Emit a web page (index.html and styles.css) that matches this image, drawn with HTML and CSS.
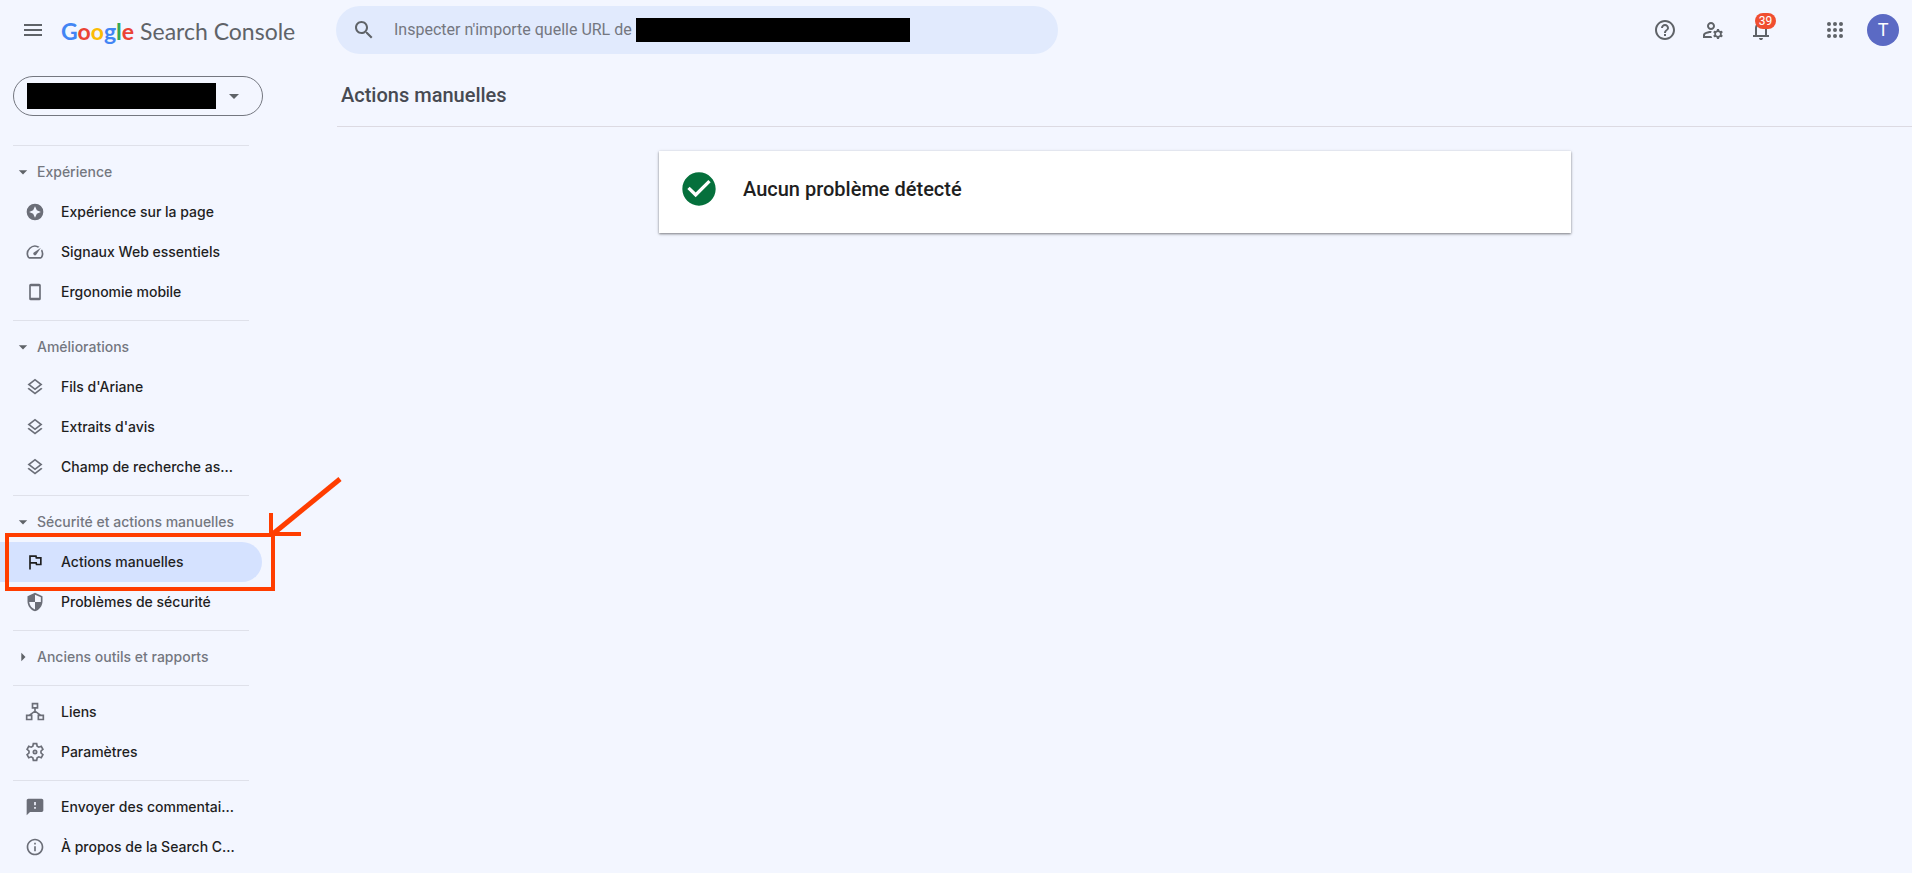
FILE: index.html
```html
<!DOCTYPE html>
<html lang="fr">
<head>
<meta charset="utf-8">
<meta name="viewport" content="width=device-width, initial-scale=1">
<title>Actions manuelles – Google Search Console</title>
<link rel="stylesheet" href="styles.css">
</head>
<body>
<svg class="sprite" aria-hidden="true">
  <symbol id="layers" viewBox="0 0 24 24"><path d="M11.99 18.54l-7.37-5.73L3 14.07l9 7 9-7-1.63-1.27-7.38 5.74zM12 16l7.36-5.73L21 9l-9-7-9 7 1.63 1.27L12 16zm0-11.47L17.74 9 12 13.47 6.26 9 12 4.53z"/></symbol>
  <symbol id="caret" viewBox="0 0 24 24"><path d="M7 10l5 5 5-5z"/></symbol>
</svg>

<header class="topbar">
  <div class="brand">
    <button class="icon-button" type="button" aria-label="Menu principal"><svg class="icon" viewBox="0 0 24 24"><path d="M3 18h18v-2H3v2zm0-5h18v-2H3v2zm0-7v2h18V6H3z"/></svg></button>
    <a class="logo" href="#"><span class="logo-google"><span class="blue">G</span><span class="red">o</span><span class="yellow">o</span><span class="blue">g</span><span class="green">l</span><span class="red">e</span></span><span class="logo-product">Search Console</span></a>
  </div>
  <form class="search" role="search">
    <svg class="icon" viewBox="0 0 24 24" aria-hidden="true"><path d="M15.5 14h-.79l-.28-.27C15.41 12.59 16 11.11 16 9.5 16 5.91 13.09 3 9.5 3S3 5.91 3 9.5 5.91 16 9.5 16c1.61 0 3.09-.59 4.23-1.57l.27.28v.79l5 4.99L20.49 19l-4.99-5zm-6 0C7.01 14 5 11.99 5 9.5S7.01 5 9.5 5 14 7.01 14 9.5 11.99 14 9.5 14z"/></svg>
    <input class="search-input" type="text" aria-label="Inspecter une URL" placeholder="Inspecter n'importe quelle URL de">
    <span class="search-mask"></span>
  </form>
  <div class="tools">
    <button class="icon-button" type="button" aria-label="Aide"><svg class="icon" viewBox="0 0 24 24"><path d="M11 18h2v-2h-2v2zm1-16C6.48 2 2 6.48 2 12s4.48 10 10 10 10-4.48 10-10S17.52 2 12 2zm0 18c-4.41 0-8-3.59-8-8s3.59-8 8-8 8 3.59 8 8-3.59 8-8 8zm0-14c-2.21 0-4 1.79-4 4h2c0-1.1.9-2 2-2s2 .9 2 2c0 2-3 1.75-3 5h2c0-2.25 3-2.5 3-5 0-2.21-1.79-4-4-4z"/></svg></button>
    <button class="icon-button" type="button" aria-label="Utilisateurs et autorisations"><svg class="icon" viewBox="0 0 24 24"><path d="M4 18v-.65c0-.34.16-.66.41-.81C6.1 15.53 8.03 15 10 15c.03 0 .05 0 .08.01.1-.7.3-1.37.59-1.98-.22-.02-.44-.03-.67-.03-2.42 0-4.68.67-6.61 1.82C2.51 15.34 2 16.32 2 17.35V20h9.26c-.42-.6-.75-1.28-.97-2H4zM10 12c2.21 0 4-1.79 4-4s-1.79-4-4-4-4 1.79-4 4 1.79 4 4 4zm0-6c1.1 0 2 .9 2 2s-.9 2-2 2-2-.9-2-2 .9-2 2-2zM20.75 16c0-.22-.03-.42-.06-.63l1.14-1.01-1-1.73-1.45.49c-.32-.27-.68-.48-1.08-.63L18 11h-2l-.3 1.49c-.4.15-.76.36-1.08.63l-1.45-.49-1 1.73 1.14 1.01c-.03.21-.06.41-.06.63s.03.42.06.63l-1.14 1.01 1 1.73 1.45-.49c.32.27.68.48 1.08.63L16 21h2l.3-1.49c.4-.15.76-.36 1.08-.63l1.45.49 1-1.73-1.14-1.01c.03-.21.06-.41.06-.63zM17 18c-1.1 0-2-.9-2-2s.9-2 2-2 2 .9 2 2-.9 2-2 2z"/></svg></button>
    <button class="icon-button" type="button" aria-label="Notifications"><svg class="icon" viewBox="0 0 24 24"><path d="M4 19v-2h2v-7q0-2.075 1.25-3.688T10.5 4.2v-.7q0-.625.438-1.062T12 2t1.063.438T13.5 3.5v.7q2 .5 3.25 2.113T18 10v7h2v2zm8 3q-.825 0-1.412-.587T10 20h4q0 .825-.587 1.413T12 22m-4-5h8v-7q0-1.65-1.175-2.825T12 6 9.175 7.175 8 10z"/></svg><span class="badge">39</span></button>
    <button class="icon-button apps" type="button" aria-label="Applications Google"><svg class="icon" viewBox="0 0 24 24"><circle cx="6" cy="6" r="2"/><circle cx="12" cy="6" r="2"/><circle cx="18" cy="6" r="2"/><circle cx="6" cy="12" r="2"/><circle cx="12" cy="12" r="2"/><circle cx="18" cy="12" r="2"/><circle cx="6" cy="18" r="2"/><circle cx="12" cy="18" r="2"/><circle cx="18" cy="18" r="2"/></svg></button>
    <button class="avatar" type="button" aria-label="Compte Google">T</button>
  </div>
</header>

<div class="layout">
  <div class="sidebar">
    <button class="property" type="button" aria-label="Propriété"><span class="property-mask"></span><svg class="icon" viewBox="0 0 24 24"><use href="#caret"/></svg></button>
    <nav class="nav">
      <section class="group">
        <button class="group-title" type="button"><svg class="caret" viewBox="0 0 24 24"><use href="#caret"/></svg>Expérience</button>
        <a class="item" href="#"><svg class="item-icon" viewBox="0 0 24 24"><path fill-rule="evenodd" d="M12 2a10 10 0 1 0 0 20 10 10 0 0 0 0-20zM12 5l2.200 4.800L19 12l-4.800 2.200L12 19l-2.200-4.800L5 12l4.800-2.200z"/></svg><span>Expérience sur la page</span></a>
        <a class="item" href="#"><svg class="item-icon" viewBox="0 0 24 24"><path d="M20.38 8.57l-1.23 1.85a8 8 0 0 1-.22 7.58H5.07A8 8 0 0 1 15.58 6.85l1.85-1.23A10 10 0 0 0 3.35 19a2 2 0 0 0 1.72 1h13.85a2 2 0 0 0 1.74-1 10 10 0 0 0-.27-10.44zM10.59 15.41a2 2 0 0 0 2.83 0l5.66-8.49-8.49 5.66a2 2 0 0 0 0 2.83z"/></svg><span>Signaux Web essentiels</span></a>
        <a class="item" href="#"><svg class="item-icon" viewBox="0 0 24 24"><path fill-rule="evenodd" d="M7 2h10a2 2 0 0 1 2 2v16a2 2 0 0 1-2 2H7a2 2 0 0 1-2-2V4a2 2 0 0 1 2-2zm0 3v14h10V5z"/></svg><span>Ergonomie mobile</span></a>
      </section>
      <section class="group">
        <button class="group-title" type="button"><svg class="caret" viewBox="0 0 24 24"><use href="#caret"/></svg>Améliorations</button>
        <a class="item" href="#"><svg class="item-icon" viewBox="0 0 24 24"><use href="#layers"/></svg><span>Fils d'Ariane</span></a>
        <a class="item" href="#"><svg class="item-icon" viewBox="0 0 24 24"><use href="#layers"/></svg><span>Extraits d'avis</span></a>
        <a class="item" href="#"><svg class="item-icon" viewBox="0 0 24 24"><use href="#layers"/></svg><span>Champ de recherche as...</span></a>
      </section>
      <section class="group">
        <button class="group-title" type="button"><svg class="caret" viewBox="0 0 24 24"><use href="#caret"/></svg>Sécurité et actions manuelles</button>
        <a class="item active" href="#" aria-current="page"><svg class="item-icon" viewBox="0 0 24 24"><path d="M12.36 6l.4 2H18v6h-3.36l-.4-2H7V6h5.36M14 4H5v17h2v-7h5.6l.4 2h7V6h-5.6L14 4z"/></svg><span>Actions manuelles</span>
          <svg class="callout" viewBox="0 0 340 120" aria-hidden="true"><path d="M7 62h266v54H7zM271 40v21h30"/><path class="shaft" d="M340 6L274 60"/></svg></a>
        <a class="item" href="#"><svg class="item-icon" viewBox="0 0 24 24"><path fill-rule="evenodd" d="M12 1L3 5v6c0 5.55 3.84 10.74 9 12 5.16-1.26 9-6.45 9-12V5l-9-4zM12 3.190V12h7V6.300zM12 12H5c.53 4.120 3.280 7.790 7 8.940z"/></svg><span>Problèmes de sécurité</span></a>
      </section>
      <section class="group">
        <button class="group-title" type="button"><svg class="caret closed" viewBox="0 0 24 24"><use href="#caret"/></svg>Anciens outils et rapports</button>
      </section>
      <section class="group">
        <a class="item" href="#"><svg class="item-icon line" viewBox="0 0 24 24"><path d="M9 2h6v5H9zM2 16h6v5H2zM16 16h6v5h-6zM12 7v4M5 16l7-5 7 5"/></svg><span>Liens</span></a>
        <a class="item" href="#"><svg class="item-icon line" viewBox="0 0 24 24"><path d="M10 2h4l.6 3 2 1.200 2.900-1 2 3.500L19.200 10.800v2.400l2.300 2.100-2 3.500-2.900-1-2 1.200-.6 3h-4l-.6-3-2-1.200-2.900 1-2-3.500 2.300-2.100v-2.400L2.500 8.700l2-3.500 2.900 1 2-1.200z"/><circle cx="12" cy="12" r="2"/></svg><span>Paramètres</span></a>
      </section>
      <section class="group">
        <a class="item" href="#"><svg class="item-icon" viewBox="0 0 24 24"><path d="M20 2H4c-1.100 0-1.990.9-1.990 2L2 22l4-4h14c1.100 0 2-.9 2-2V4c0-1.100-.9-2-2-2zm-7 12h-2v-2h2v2zm0-4h-2V6h2v4z"/></svg><span>Envoyer des commentai...</span></a>
        <a class="item" href="#"><svg class="item-icon" viewBox="0 0 24 24"><path d="M11 7h2v2h-2zm0 4h2v6h-2zm1-9C6.480 2 2 6.480 2 12s4.480 10 10 10 10-4.480 10-10S17.520 2 12 2zm0 18c-4.410 0-8-3.590-8-8s3.590-8 8-8 8 3.590 8 8-3.590 8-8 8z"/></svg><span>À propos de la Search C...</span></a>
      </section>
    </nav>
  </div>
  <main class="main">
    <h1 class="page-title">Actions manuelles</h1>
    <div class="content">
      <section class="card">
        <svg class="status" viewBox="0 0 24 24" aria-hidden="true"><path d="M12 2C6.480 2 2 6.480 2 12s4.480 10 10 10 10-4.480 10-10S17.520 2 12 2zm-2 15l-5-5 1.410-1.410L10 14.170l7.590-7.590L19 8l-9 9z"/></svg>
        <h2 class="card-title">Aucun problème détecté</h2>
      </section>
    </div>
  </main>
</div>
</body>
</html>
```
FILE: styles.css
```css
* { box-sizing: border-box; }
body { margin: 0; background: #f3f6ff; color: #1f1f1f; font-family: Roboto, "Liberation Sans", sans-serif; }
button { border: 0; padding: 0; background: none; font: inherit; color: inherit; cursor: pointer; }
a { color: inherit; text-decoration: none; }
.sprite { position: absolute; width: 0; height: 0; }
.icon { display: block; flex: none; width: 24px; height: 24px; fill: #5f6368; }

.topbar { display: flex; align-items: center; height: 60px; padding-right: 13px; }
.brand { display: flex; align-items: center; flex: none; width: 336px; padding-left: 13px; gap: 8px; }
.icon-button { position: relative; display: grid; place-items: center; flex: none; width: 40px; height: 40px; border-radius: 50%; }
.logo { display: flex; align-items: baseline; gap: 6px; padding-top: 2px; line-height: 32px; white-space: nowrap; font-family: Lato, sans-serif; font-size: 23px; }
.logo-google { font-weight: 700; }
.logo-product { color: #5f6368; }
.blue { color: #4285f4; }
.red { color: #ea4335; }
.yellow { color: #fbbc04; }
.green { color: #34a853; }

.search { position: relative; display: flex; align-items: center; flex: 0 1 722px; height: 48px; padding: 0 16px; gap: 18px; border-radius: 24px; background: #e1eafd; }
.search-input { flex: 1; min-width: 0; padding: 0; border: 0; outline: 0; background: none; font: 16px/24px Roboto, sans-serif; }
.search-input::placeholder { color: #747780; opacity: 1; }
.search-mask { position: absolute; left: 300px; top: 12px; width: 274px; height: 24px; background: #000; }

.tools { display: flex; align-items: center; gap: 8px; margin-left: auto; }
.apps { margin-left: 26px; }
.badge { position: absolute; left: 14px; top: 3px; width: 21px; height: 16px; border-radius: 8px; background: #f04e30; color: #fff; font-size: 12px; line-height: 16px; text-align: center; }
.avatar { width: 32px; height: 32px; margin-left: 4px; border-radius: 50%; background: #5b6ac4; color: #fff; font-size: 18px; line-height: 32px; }

.layout { display: flex; align-items: flex-start; }
.sidebar { flex: none; width: 337px; padding-top: 16px; }
.property { display: flex; align-items: center; justify-content: space-between; width: 250px; height: 40px; margin-left: 13px; padding: 0 16px 0 13px; border: 1px solid #747780; border-radius: 20px; }
.property-mask { width: 189px; height: 26px; background: #000; }
.nav { padding-top: 29px; font-family: Inter, sans-serif; font-size: 14px; font-weight: 500; line-height: 20px; }
.group { position: relative; padding: 7px 0 8px; }
.group::before { content: ""; position: absolute; left: 13px; top: 0; width: 236px; height: 1px; background: #dfe1ea; }
.group-title { display: flex; align-items: center; height: 40px; padding-left: 13px; gap: 4px; color: #747780; }
.caret { width: 20px; height: 20px; fill: #5f6368; }
.closed { transform: rotate(-90deg); }
.item { position: relative; display: flex; align-items: center; width: 262px; height: 40px; padding-left: 25px; gap: 16px; border-radius: 0 20px 20px 0; white-space: nowrap; }
.item-icon { flex: none; width: 20px; height: 20px; fill: #6b6e78; }
.line { fill: none; stroke: #6b6e78; stroke-width: 2; }
.active { background: #d5e2ff; }
.active .item-icon { fill: #1f1f1f; }
.active .callout { position: absolute; left: 0; top: -69px; z-index: 1; width: 340px; height: 120px; overflow: visible; fill: none; stroke: #ff3d00; stroke-width: 4; pointer-events: none; }
.shaft { stroke-width: 5; }

.main { flex: 1; min-width: 0; }
.page-title { margin: 0; padding: 19px 4px 15px; border-bottom: 1px solid #dcdae2; color: #474a52; font-size: 20px; font-weight: 500; line-height: 32px; }
.content { padding: 24px 19px 24px 0; }
.card { display: flex; align-items: flex-start; max-width: 912px; min-height: 82px; margin: 0 auto; padding: 18px 20px; gap: 24px; background: #fff; box-shadow: 0 1px 2px rgba(0, 0, 0, .4), 0 1px 4px rgba(0, 0, 0, .15); }
.status { flex: none; width: 40px; height: 40px; fill: #05703c; }
.card-title { margin: 0; font-size: 20px; font-weight: 500; line-height: 40px; }
```
